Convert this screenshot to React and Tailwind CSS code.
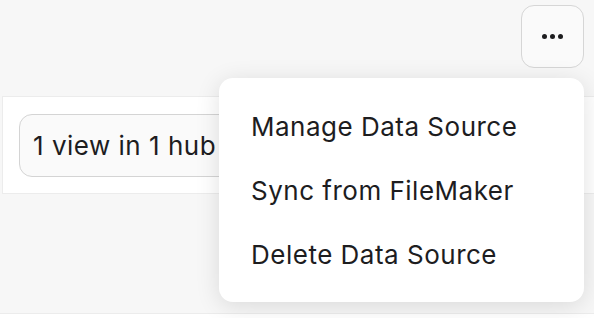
import React from 'react';

export default function App() {
  const items = ['Manage Data Source', 'Sync from FileMaker', 'Delete Data Source'];

  return (
    <div className="relative w-full h-[318px] overflow-hidden bg-[#f7f7f7] text-[#1d1d1f]" style={{ fontFamily: 'Inter, "Noto Sans", sans-serif' }}>
      {/* Header with overflow button */}
      <div className="h-[96px] flex justify-end items-start pt-[5px] pr-[10px]">
        <button className="w-[63px] h-[63px] rounded-[13px] border border-[#d6d6d6] bg-[#fafafa] flex items-center justify-center gap-[3px]">
          <span className="w-[5px] h-[5px] rounded-full bg-[#1d1d1f]" />
          <span className="w-[5px] h-[5px] rounded-full bg-[#1d1d1f]" />
          <span className="w-[5px] h-[5px] rounded-full bg-[#1d1d1f]" />
        </button>
      </div>

      {/* Data source row */}
      <div className="ml-[2px] h-[98px] bg-white border-t border-b border-l border-[#ececec] flex items-center pl-[16px]">
        <div className="h-[63px] w-[260px] rounded-[13px] border border-[#d4d4d4] bg-[#fafafa] flex items-center pl-[13px] text-[26px] tracking-[0.5px] whitespace-nowrap">
          1 view in 1 hub
        </div>
      </div>

      <div className="h-[119px]" />
      <div className="h-[10px] bg-white border-t border-[#ececec]" />

      {/* Dropdown menu */}
      <div className="absolute left-[219px] top-[78px] w-[365px] h-[224px] rounded-[14px] bg-white shadow-[0_4px_24px_rgba(0,0,0,0.12)] flex flex-col justify-center">
        {items.map((label) => (
          <div key={label} className="h-[64px] flex items-center pl-[32px] text-[26px] tracking-[0.5px] text-[#1d1d1f]">
            {label}
          </div>
        ))}
      </div>
    </div>
  );
}
